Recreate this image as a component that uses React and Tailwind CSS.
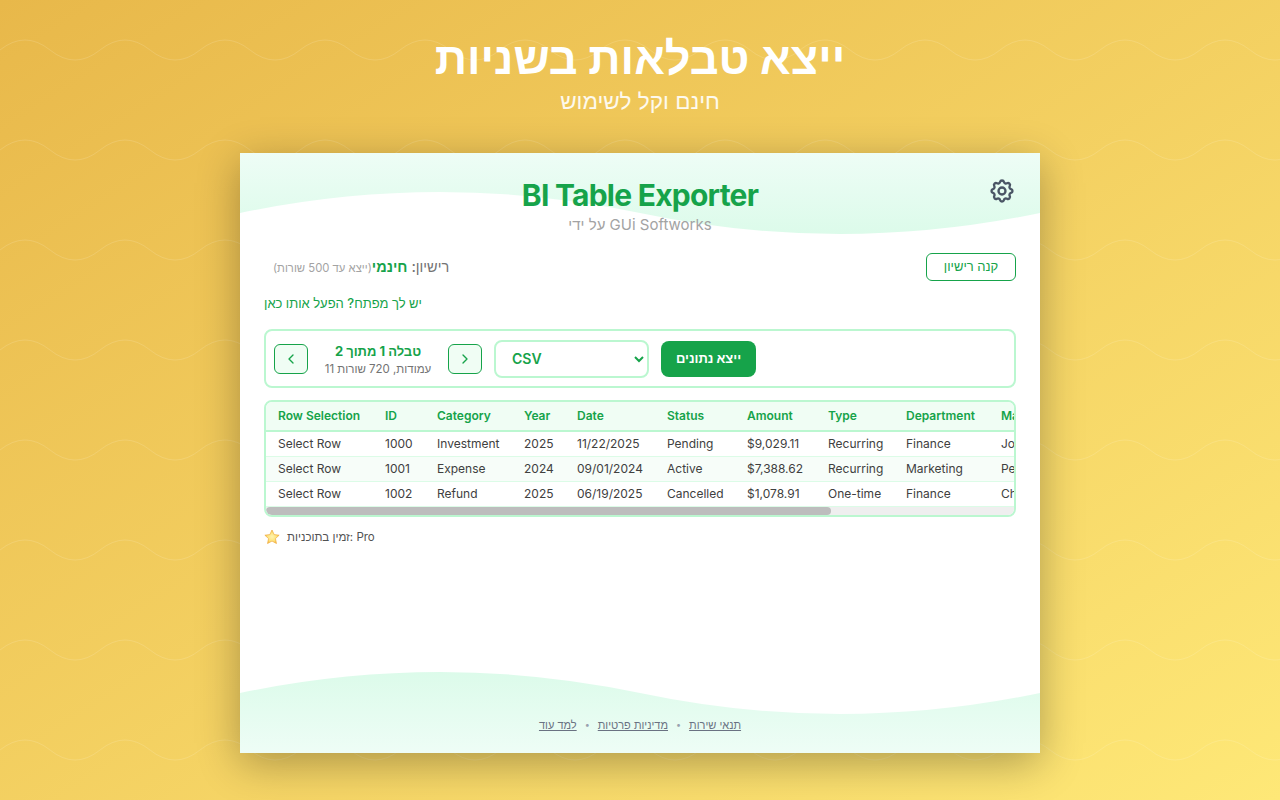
import React from 'react';
import { ChevronLeft, ChevronRight } from 'lucide-react';
import { HiOutlineCog } from 'react-icons/hi';

const columns = [
  ['Row Selection', 'w-[107px]'],
  ['ID', 'w-[52px]'],
  ['Category', 'w-[87px]'],
  ['Year', 'w-[53px]'],
  ['Date', 'w-[90px]'],
  ['Status', 'w-[80px]'],
  ['Amount', 'w-[81px]'],
  ['Type', 'w-[78px]'],
  ['Department', 'w-[95px]'],
  ['Manager', 'w-[120px]'],
];

const rows = [
  ['Select Row', '1000', 'Investment', '2025', '11/22/2025', 'Pending', '$9,029.11', 'Recurring', 'Finance', 'John Smith'],
  ['Select Row', '1001', 'Expense', '2024', '09/01/2024', 'Active', '$7,388.62', 'Recurring', 'Marketing', 'Peter Jones'],
  ['Select Row', '1002', 'Refund', '2025', '06/19/2025', 'Cancelled', '$1,078.91', 'One-time', 'Finance', 'Chris Brown'],
];

const fontStack = "font-['Inter','Liberation_Sans',sans-serif]";

const App = () => {
  return (
    <div className={`relative min-h-screen overflow-hidden bg-gradient-to-br from-[#e8b84a] to-[#fee877] ${fontStack}`}>
      {/* wave pattern */}
      <svg className="absolute inset-0 h-full w-full" aria-hidden="true">
        <defs>
          <pattern id="waves" width="100" height="100" patternUnits="userSpaceOnUse">
            <path d="M0 50 Q25 30 50 50 T100 50" fill="none" stroke="#ffffff" strokeOpacity="0.13" strokeWidth="1" />
          </pattern>
        </defs>
        <rect width="100%" height="100%" fill="url(#waves)" />
      </svg>

      <div className="relative flex flex-col items-center">
        <h1 className="mt-[30px] text-[45px] leading-[56px] font-bold text-white">ייצא טבלאות בשניות</h1>
        <p className="mt-[-1px] text-[22.5px] leading-8 text-white/90">חינם וקל לשימוש</p>

        {/* card */}
        <div className="relative mt-[36px] flex h-[600px] w-[800px] flex-col bg-white px-6 shadow-[0_10px_40px_rgba(0,0,0,0.3)]">
          <svg className="absolute top-0 left-0" width="800" height="81" viewBox="0 0 800 81" aria-hidden="true">
            <defs>
              <linearGradient id="topWave" x1="0" y1="0" x2="0" y2="1">
                <stop offset="0" stopColor="#eefdf6" />
                <stop offset="1" stopColor="#dcfbea" />
              </linearGradient>
            </defs>
            <path d="M0 60 Q200 18 400 60 T800 60 V0 H0 Z" fill="url(#topWave)" />
          </svg>
          <svg className="absolute bottom-0 left-0" width="800" height="81" viewBox="0 0 800 81" aria-hidden="true">
            <defs>
              <linearGradient id="bottomWave" x1="0" y1="0" x2="0" y2="1">
                <stop offset="0" stopColor="#dcfbea" />
                <stop offset="1" stopColor="#eefdf6" />
              </linearGradient>
            </defs>
            <path d="M0 21 Q200 -21 400 21 T800 21 V81 H0 Z" fill="url(#bottomWave)" />
          </svg>

          <button className="absolute top-6 right-6 text-gray-600">
            <HiOutlineCog className="h-7 w-7" />
          </button>

          {/* header */}
          <div className="relative pt-6 text-center">
            <div className="text-3xl font-bold tracking-tight text-[#16a34a]">BI Table Exporter</div>
            <div className="text-[15px] leading-6 text-[#a3a3a3]">על ידי GUi Softworks</div>
          </div>

          {/* license */}
          <div className="relative mt-4 flex items-center justify-between pl-[9px]">
            <div dir="rtl" className="text-[14.5px] font-medium text-[#737373]">
              רישיון: <span className="font-semibold text-[#16a34a]">חינמי</span>
              <span className="text-[11.3px] font-normal text-[#a3a3a3]">(ייצא עד 500 שורות)</span>
            </div>
            <button className="h-7 w-[90px] rounded-md border border-[#16a34a] bg-white text-[13px] font-medium text-[#16a34a]">קנה רישיון</button>
          </div>

          <div className="mt-3 text-[13px] leading-5 font-medium text-[#16a34a]">יש לך מפתח? הפעל אותו כאן</div>

          {/* toolbar */}
          <div className="mt-4 flex h-[59px] items-center rounded-lg border-2 border-[#bbf7d0] pl-2">
            <button className="flex h-[30px] w-[34px] items-center justify-center rounded-md border border-[#16a34a] bg-[#f0fdf4] text-[#16a34a]">
              <ChevronLeft size={16} />
            </button>
            <div className="mx-4 mt-[3px] w-[108px] text-center whitespace-nowrap">
              <div className="text-[13px] leading-[18px] font-bold text-[#16a34a]">טבלה 1 מתוך 2</div>
              <div className="text-[11.5px] leading-[18px] text-[#737373]">11 עמודות, 720 שורות</div>
            </div>
            <button className="flex h-[30px] w-[34px] items-center justify-center rounded-md border border-[#16a34a] bg-[#f0fdf4] text-[#16a34a]">
              <ChevronRight size={16} />
            </button>
            <select className="mr-3 ml-3 h-[38px] w-[155px] rounded-lg border-2 border-[#bbf7d0] bg-white px-3 text-sm font-semibold text-[#16a34a]">
              <option>CSV</option>
            </select>
            <button className="h-9 w-[95px] rounded-lg bg-[#16a34a] text-[13px] font-bold text-white">ייצא נתונים</button>
          </div>

          {/* table */}
          <div className="mt-[12px] overflow-hidden rounded-lg border-2 border-[#bbf7d0] bg-white">
            <div className="overflow-hidden">
              <table className="w-[843px] table-fixed border-collapse text-xs whitespace-nowrap">
                <thead>
                  <tr className="h-[29px] border-b-2 border-[#bbf7d0] bg-[#f0fdf4]">
                    {columns.map(([name, width]) => (
                      <th key={name} className={`px-3 text-left font-semibold text-[#16a34a] ${width}`}>{name}</th>
                    ))}
                  </tr>
                </thead>
                <tbody>
                  {rows.map((row, i) => (
                    <tr key={row[1]} className={`h-[25px] border-b border-[#dcfce7] ${i % 2 === 1 ? 'bg-[#f7fdf9]' : 'bg-white'}`}>
                      {row.map((cell, j) => (
                        <td key={j} className="px-3 text-[#404040]">{cell}</td>
                      ))}
                    </tr>
                  ))}
                </tbody>
              </table>
            </div>
            <div className="h-2 bg-[#efefef]">
              <div className="h-2 w-[565px] rounded-full bg-[#bdbdbd]" />
            </div>
          </div>

          <div className="mt-3 flex items-center gap-[7px] text-[11.5px] leading-4 text-[#525252]">
            <svg width="16" height="16" viewBox="0 0 24 24" aria-hidden="true">
              <defs>
                <radialGradient id="star" cx="0.5" cy="0.5" r="0.55">
                  <stop offset="0" stopColor="#fff3b0" />
                  <stop offset="0.6" stopColor="#fde27a" />
                  <stop offset="1" stopColor="#f6b73c" />
                </radialGradient>
              </defs>
              <path d="M12 1.5l3.2 6.9 7.5.9-5.5 5.1 1.5 7.4L12 18.1l-6.7 3.7 1.5-7.4L1.3 9.3l7.5-.9z" fill="url(#star)" stroke="#eea83a" strokeWidth="1" strokeLinejoin="round" />
            </svg>
            <span>זמין בתוכניות: Pro</span>
          </div>

          {/* footer */}
          <div dir="rtl" className="relative mt-auto flex items-center justify-center gap-2 pb-5 text-[11px] leading-4 text-gray-500">
            <a className="underline">תנאי שירות</a>
            <span className="text-[9px] text-gray-400">•</span>
            <a className="underline">מדיניות פרטיות</a>
            <span className="text-[9px] text-gray-400">•</span>
            <a className="underline">למד עוד</a>
          </div>
        </div>
      </div>
    </div>
  );
};

export default App;
